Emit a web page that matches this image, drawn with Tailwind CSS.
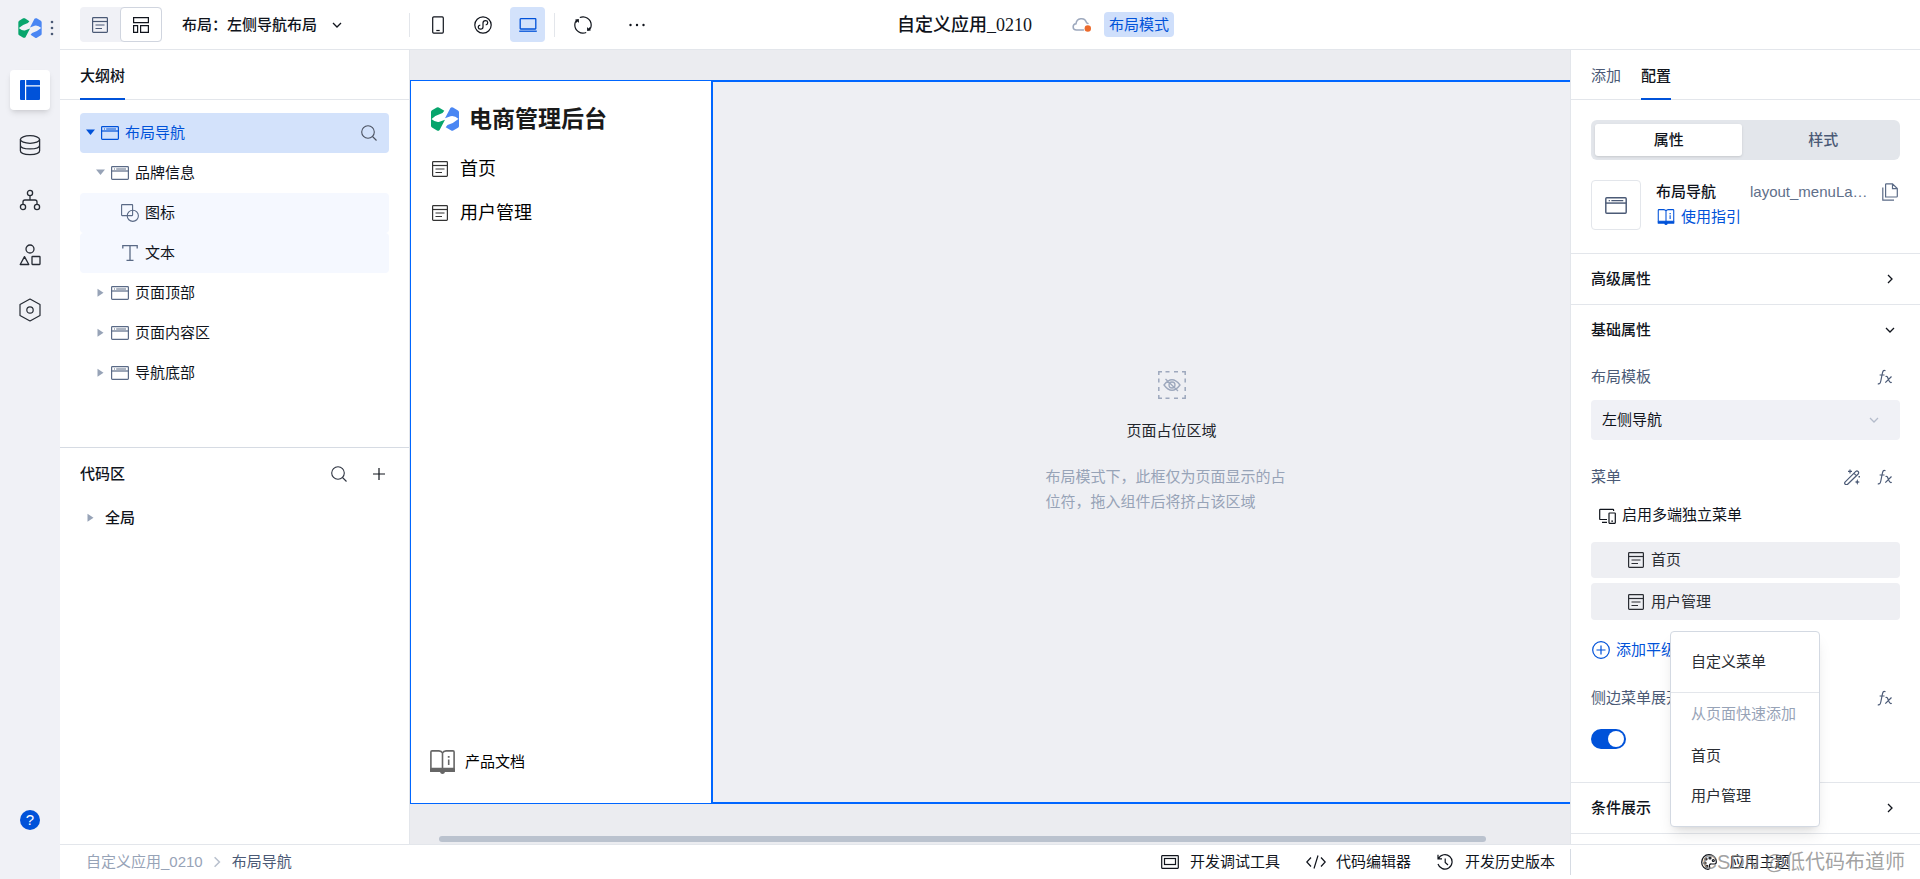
<!DOCTYPE html>
<html lang="zh-CN">
<head>
<meta charset="utf-8">
<meta name="viewport" content="width=device-width, initial-scale=1">
<title>自定义应用_0210</title>
<script src="https://cdn.jsdelivr.net/npm/@tailwindcss/browser@4"></script>
</head>
<body class="flex h-screen overflow-hidden bg-white font-['Liberation_Sans','Noto_Sans_CJK_SC',sans-serif] text-[15px] leading-5 text-[#10141c]">

<svg class="hidden" aria-hidden="true">
  <symbol id="logo" viewBox="0 0 28 24">
    <path fill="#07a56c" d="M0 5Q0 3.800 1 3.200L5.800.4Q6.800-.1 7.800.4L13.300 3.800 11.500 6Q5 8 .6 12L0 12.200Z"/>
    <path fill="#07a56c" d="M0 11.800Q5 16 8.500 14.800L14 12.700 8.600 23Q7.600 24.300 6 23.600L1 20.600Q0 20 0 18.800Z"/>
    <path fill="#4a86f3" d="M28 19Q28 20.200 27 20.800L22.200 23.600Q21.200 24.100 20.200 23.600L14.700 20.200 16.500 18Q23 16 27.400 12L28 11.800Z"/>
    <path fill="#4a86f3" d="M28 12.200Q23 8 19.500 9.200L14 11.300 19.400 1Q20.400-.3 22 .4L27 3.400Q28 4 28 5.200Z"/>
  </symbol>
  <symbol id="panel" viewBox="0 0 18 14"><g fill="none" stroke="currentColor"><rect x=".6" y=".6" width="16.800" height="12.800" rx=".8" stroke-width="1.200"/><path d="M.6 5H17.400" stroke-width="1.200"/><path d="M3 3h1M5.200 3H15"/></g></symbol>
  <symbol id="page" viewBox="0 0 16 16"><g fill="none" stroke="currentColor"><rect x=".6" y=".6" width="14.800" height="14.800" rx=".8" stroke-width="1.200"/><path d="M.6 4.500H15.400" stroke-width="1.200"/><path d="M3.500 8H12.500M3.500 11.500H10" stroke-width="1.200"/></g></symbol>
  <symbol id="search" viewBox="0 0 16 16"><g fill="none" stroke="currentColor" stroke-width="1.100"><circle cx="7" cy="7" r="6.300"/><path d="m11.500 11.500 4 4"/></g></symbol>
  <symbol id="down" viewBox="0 0 10 10"><path fill="none" stroke="currentColor" stroke-width="1.300" d="m1 3 4 4 4-4"/></symbol>
  <symbol id="right" viewBox="0 0 10 10"><path fill="none" stroke="currentColor" stroke-width="1.300" d="m3 1 4 4-4 4"/></symbol>
  <symbol id="caret-down" viewBox="0 0 10 10"><path fill="currentColor" d="M0 1.500h9L4.500 7Z"/></symbol>
  <symbol id="caret-right" viewBox="0 0 10 10"><path fill="currentColor" d="M1.500 .8v8l6-4Z"/></symbol>
  <symbol id="book" viewBox="0 0 25 24"><path fill="none" stroke="currentColor" stroke-width="1.600" d="M12.500 20V3Q11.500.9 9 .9H2Q.9.9.9 2V18.500H24.100V2Q24.100.9 23 .9H16Q13.500.9 12.500 3M18.700 9.500V15"/><path fill="currentColor" d="M0 18.500h25v3q0 .5-.5.5H15q-.5 2-2.500 2T10 22H.5Q0 22 0 21.500ZM17.800 6h1.800v1.800h-1.800Z"/></symbol>
  <symbol id="fx" viewBox="0 0 16 16"><path fill="none" stroke="currentColor" stroke-width="1.200" d="M8.500 1.800C6.500.5 5.800 2 5.300 4.500L3.800 12C3.300 14.600 2.300 15.300.8 14.600M2.600 6H7.500M8.500 7.500c1.500-.8 2 .5 2.700 2.300S13 14.500 14.700 13.300M14.500 7.500 8.300 13.700"/></symbol>
</svg>

<!-- Icon rail -->
<nav class="flex w-15 shrink-0 flex-col items-center bg-[#f0f1f6] text-[#262b34]" aria-label="主导航">
  <div class="flex h-13 w-full items-center gap-2 pt-1 pl-[18px]">
    <svg class="h-5 w-6"><use href="#logo"/></svg>
    <svg class="h-4 w-1" viewBox="0 0 4 16" fill="#4b5a76"><circle cx="2" cy="2" r="1.300"/><circle cx="2" cy="8" r="1.300"/><circle cx="2" cy="14" r="1.300"/></svg>
  </div>
  <div class="mt-[18px] flex flex-1 flex-col items-center gap-[15px]">
    <button class="flex size-10 items-center justify-center rounded bg-white shadow-md" aria-label="页面">
      <svg class="size-5" viewBox="0 0 20 20"><path fill="#0052d9" d="M1 0H5V20H1Q0 20 0 19V1Q0 0 1 0ZM6.200 0H19Q20 0 20 1V5.200H6.200ZM6.200 6.400H20V19Q20 20 19 20H6.200Z"/></svg>
    </button>
    <button class="flex size-10 items-center justify-center" aria-label="数据">
      <svg class="size-[22px]" viewBox="0 0 22 22" fill="none" stroke="currentColor" stroke-width="1.300"><ellipse cx="11" cy="5.500" rx="9.600" ry="3.800"/><path d="M1.400 5.500V16.800C1.400 21.800 20.600 21.800 20.600 16.800V5.500M1.400 11.200c0 5 19.200 5 19.200 0"/></svg>
    </button>
    <button class="flex size-10 items-center justify-center" aria-label="流程">
      <svg class="size-[22px]" viewBox="0 0 22 22" fill="none" stroke="currentColor" stroke-width="1.300"><circle cx="11" cy="4" r="2.600"/><circle cx="4" cy="18" r="2.600"/><circle cx="18" cy="18" r="2.600"/><path d="M11 6.600V11M4 15.400V13Q4 11 6 11H16Q18 11 18 13V15.400"/></svg>
    </button>
    <button class="flex size-10 items-center justify-center" aria-label="组件">
      <svg class="size-[22px]" viewBox="0 0 22 22" fill="none" stroke="currentColor" stroke-width="1.300"><circle cx="11" cy="5" r="4"/><path d="M5.500 12.600 1.200 20.500H9.800Z" stroke-linejoin="round"/><rect x="13" y="12.500" width="8" height="8" rx=".5"/></svg>
    </button>
    <button class="flex size-10 items-center justify-center" aria-label="设置">
      <svg class="h-6 w-[22px]" viewBox="0 0 22 24" fill="none" stroke="currentColor" stroke-width="1.200"><path d="M11 1 21 6.500V17.500L11 23 1 17.500V6.500Z" stroke-linejoin="round"/><circle cx="11" cy="12" r="3.200"/></svg>
    </button>
  </div>
  <button class="mb-[49px] flex size-5 items-center justify-center rounded-full bg-[#0052d9] text-[15px] text-white">?</button>
</nav>

<div class="flex min-w-0 flex-1 flex-col">

  <!-- Toolbar -->
  <header class="flex h-[50px] shrink-0 items-center border-b border-[#e3e6eb] pl-5">
    <div class="flex w-[329px] items-center">
      <div class="flex h-[35px] rounded bg-[#f0f1f6]">
        <button class="flex w-10 items-center justify-center text-[#4b5a76]" aria-label="页面模式"><svg class="size-4"><use href="#page"/></svg></button>
        <button class="flex w-[42px] items-center justify-center rounded border border-[#d0d5df] bg-white" aria-label="布局模式">
          <svg class="size-[18px]" viewBox="0 0 18 18" fill="none" stroke="currentColor" stroke-width="1.200"><path d="M1.600 1.600H16.400V6.600H1.600ZM1.600 9.600H5.600V16.400H1.600ZM8.600 9.600H16.400V16.400H8.600Z"/></svg>
        </button>
      </div>
      <button class="ml-5 flex items-center gap-[15px] font-medium">布局：左侧导航布局<svg class="size-[10px]"><use href="#down"/></svg></button>
    </div>
    <span class="h-6 w-px bg-[#e3e6eb]"></span>
    <div class="ml-[10px] flex h-[35px] items-center gap-[10px]">
      <button class="flex size-[35px] items-center justify-center" aria-label="手机"><svg class="h-[18px] w-3" viewBox="0 0 12 18" fill="none" stroke="currentColor" stroke-width="1.200"><rect x=".7" y=".9" width="10.600" height="16.200" rx="1"/><path d="M4.300 14.500h3.400"/></svg></button>
      <button class="flex size-[35px] items-center justify-center" aria-label="小程序"><svg class="size-[18px]" viewBox="0 0 18 18" fill="none" stroke="currentColor" stroke-width="1.200"><circle cx="9" cy="9" r="8.200"/><path d="M6.300 9C3.300 9.700 3.800 13.200 6.500 13.200 8 13.200 9 12.200 9 11V7C9 5.700 10 4.700 11.500 4.700 14.200 4.700 14.700 8.200 11.700 9"/></svg></button>
      <button class="flex size-[35px] items-center justify-center rounded bg-[#d3e2fb] text-[#0052d9]" aria-label="电脑"><svg class="h-[14px] w-[18px]" viewBox="0 0 18 14" fill="none" stroke="currentColor" stroke-width="1.300"><rect x="1.200" y=".7" width="15.600" height="10.300" rx=".5"/><path d="M.2 13.200H17.800"/></svg></button>
    </div>
    <span class="ml-[9px] h-6 w-px bg-[#e3e6eb]"></span>
    <button class="ml-[10px] flex size-[35px] items-center justify-center" aria-label="刷新"><svg class="size-[18px]" viewBox="0 0 18 18" fill="none" stroke="currentColor" stroke-width="1.200"><path d="M5.800 1.500A8.200 8.200 0 0 1 17.200 9Q17.200 11 16.300 12.800M12.200 16.500A8.200 8.200 0 0 1 .8 9Q.8 7 1.700 5.200"/><path fill="currentColor" stroke="none" d="M1.300 3.500 4.800 3 5 7 3.600 5.600 2 7ZM16.700 14.500 13.200 15 13 11 14.400 12.400 16 11Z"/></svg></button>
    <button class="ml-[19px] flex size-[35px] items-center justify-center" aria-label="更多"><svg class="h-1 w-4" viewBox="0 0 16 4" fill="currentColor"><circle cx="1.500" cy="2" r="1.200"/><circle cx="8" cy="2" r="1.200"/><circle cx="14.500" cy="2" r="1.200"/></svg></button>
    <div class="ml-[243px] flex items-center">
      <h1 class="font-['Liberation_Serif','Noto_Sans_CJK_SC',serif] text-lg font-medium leading-6">自定义应用_0210</h1>
      <svg class="ml-10 h-4 w-5" viewBox="0 0 20 16"><path fill="none" stroke="#9da8bd" stroke-width="1.500" stroke-linecap="round" d="M11.500 13H4.500C0 13 .2 7 4 6.700 4.500 1 12.500-.5 14.500 5.500 14.600 6 15.300 6.200 16 6.500"/><circle cx="15.800" cy="11.500" r="3.200" fill="#ec6b2d"/></svg>
      <span class="ml-3 rounded bg-[#cfdffb] px-[5px] py-[2px] leading-[21px] text-[#0052d9]">布局模式</span>
    </div>
  </header>

  <div class="flex min-h-0 flex-1">

    <!-- Outline and code -->
    <aside class="flex w-[350px] shrink-0 flex-col border-r border-[#e3e6eb]">
      <div class="flex h-[50px] border-b border-[#e3e6eb] px-5">
        <button class="-mb-px border-b-2 border-[#0052d9] pt-[3px] font-medium">大纲树</button>
      </div>
      <ul class="mt-[13px] px-5">
        <li class="flex h-10 items-center rounded bg-[#d3e2fb] pr-3 pl-[6px] text-[#0052d9]">
          <svg class="size-[10px]"><use href="#caret-down"/></svg><svg class="mr-[6px] ml-[5px] h-[14px] w-[18px]"><use href="#panel"/></svg><span class="flex-1">布局导航</span>
          <button class="text-[#4a5160]" aria-label="搜索大纲"><svg class="size-4"><use href="#search"/></svg></button>
        </li>
        <li class="flex h-10 items-center pl-4"><svg class="size-[10px] text-[#97a3b7]"><use href="#caret-down"/></svg><svg class="mr-[6px] ml-[5px] h-[14px] w-[18px] text-[#5a6a86]"><use href="#panel"/></svg>品牌信息</li>
        <li class="flex h-10 items-center rounded bg-[#f5f8ff] pl-[41px]"><svg class="mr-[6px] size-[18px] text-[#5a6a86]" viewBox="0 0 18 18" fill="none" stroke="currentColor" stroke-width="1.100"><rect x=".6" y=".6" width="11" height="11" rx=".5"/><circle cx="11.800" cy="11.800" r="5.600"/></svg>图标</li>
        <li class="flex h-10 items-center rounded bg-[#f5f8ff] pl-[41px]"><svg class="mr-[6px] size-[18px] text-[#5a6a86]" viewBox="0 0 18 18" fill="none" stroke="currentColor" stroke-width="1.300"><path d="M1.800 4.500V1.700H16.200V4.500M9 1.700V16.300M5.500 16.300h7"/></svg>文本</li>
        <li class="flex h-10 items-center pl-4"><svg class="size-[10px] text-[#97a3b7]"><use href="#caret-right"/></svg><svg class="mr-[6px] ml-[5px] h-[14px] w-[18px] text-[#5a6a86]"><use href="#panel"/></svg>页面顶部</li>
        <li class="flex h-10 items-center pl-4"><svg class="size-[10px] text-[#97a3b7]"><use href="#caret-right"/></svg><svg class="mr-[6px] ml-[5px] h-[14px] w-[18px] text-[#5a6a86]"><use href="#panel"/></svg>页面内容区</li>
        <li class="flex h-10 items-center pl-4"><svg class="size-[10px] text-[#97a3b7]"><use href="#caret-right"/></svg><svg class="mr-[6px] ml-[5px] h-[14px] w-[18px] text-[#5a6a86]"><use href="#panel"/></svg>导航底部</li>
      </ul>
      <section class="mt-[54px] flex-1 border-t border-[#d6dbe3] px-5">
        <div class="flex h-[52px] items-center">
          <h2 class="flex-1 font-medium">代码区</h2>
          <button class="text-[#2d3340]" aria-label="搜索代码"><svg class="size-4"><use href="#search"/></svg></button>
          <button class="mr-1 ml-[26px]" aria-label="添加代码"><svg class="size-3" viewBox="0 0 12 12" stroke="currentColor" stroke-width="1.200"><path d="M6 0V12M0 6H12"/></svg></button>
        </div>
        <button class="flex h-9 items-center pl-[6px] font-medium"><svg class="mr-[9px] size-[10px] text-[#97a3b7]"><use href="#caret-right"/></svg>全局</button>
      </section>
    </aside>

    <!-- Canvas -->
    <main class="flex min-w-0 flex-1 flex-col overflow-hidden bg-[#ebecf0] pt-[30px]">
      <div class="flex min-h-0 w-[calc(100%+62px)] flex-1">
        <section class="flex w-[301px] shrink-0 flex-col border border-r-0 border-[#0066ff] bg-white pb-[27px] pl-[19px]">
          <div class="mt-5 flex h-9 items-center gap-[10px] pl-px"><svg class="h-6 w-7"><use href="#logo"/></svg><h2 class="text-[23px] font-bold leading-8 text-[#1a1a1a]">电商管理后台</h2></div>
          <nav class="mt-[10px] flex flex-col text-lg text-black" aria-label="应用菜单">
            <a href="#home" class="flex h-11 items-center gap-3 pl-[2px]"><svg class="size-4 text-[#333]"><use href="#page"/></svg>首页</a>
            <a href="#users" class="flex h-11 items-center gap-3 pl-[2px]"><svg class="size-4 text-[#333]"><use href="#page"/></svg>用户管理</a>
          </nav>
          <a href="#docs" class="mt-auto flex h-7 items-center gap-[10px] text-black"><svg class="h-6 w-[25px] text-[#666]"><use href="#book"/></svg>产品文档</a>
        </section>
        <section class="flex flex-1 flex-col items-center justify-center border-2 border-[#0066ff] bg-[#eeeff3]">
          <svg class="size-7 text-[#9da8bd]" viewBox="0 0 28 28" fill="none" stroke="currentColor" stroke-width="1.500"><path d="M.8 4V.8H4M7.500.8h4M16 .8h4M24 .8h3.200V4M27.200 7.500v4M27.200 16v4M27.200 24v3.200H24M20 27.200H16M11.500 27.200h-4M4 27.200H.8V24M.8 20V16M.8 11.500v-4"/><path stroke-width="1.300" d="M6 14Q14 3.500 22 14 14 24.500 6 14ZM7.500 8 20 20"/><circle cx="14" cy="14" r="3" stroke-width="1.300"/></svg>
          <p class="mt-[22px] text-[#22252b]">页面占位区域</p>
          <p class="mt-[23px] w-[252px] leading-[25px] text-[#97a3b7]">布局模式下，此框仅为页面显示的占位符，拖入组件后将挤占该区域</p>
        </section>
      </div>
      <div class="pt-8 pr-[84px] pb-[2px] pl-[29px]"><div class="h-[6px] rounded-full bg-[#bac2ce]"></div></div>
    </main>

    <!-- Inspector -->
    <aside class="relative flex w-[350px] shrink-0 flex-col border-l border-[#e3e6eb] [&>*]:shrink-0">
      <div class="flex h-[50px] gap-5 border-b border-[#e3e6eb] px-5">
        <button class="pt-[2px] text-[#4b5a76]">添加</button>
        <button class="-mb-px border-b-2 border-[#0052d9] pt-[3px] font-medium">配置</button>
      </div>
      <div class="mx-5 mt-5 flex h-10 rounded-md bg-[#e3e6eb] p-1 font-medium">
        <button class="w-[49%] rounded-[3px] bg-white shadow">属性</button>
        <button class="flex-1 pl-2 text-[#4b5a76]">样式</button>
      </div>
      <div class="mx-5 mt-5 flex h-[50px] gap-[15px]">
        <div class="flex size-[50px] items-center justify-center rounded border border-[#e3e6eb] text-[#4b5a76]"><svg class="h-[17px] w-[22px]"><use href="#panel"/></svg></div>
        <div class="flex min-w-0 flex-1 flex-col gap-[3px]">
          <div class="flex items-center leading-6"><strong class="w-[94px] shrink-0 font-medium">布局导航</strong><span class="w-[125px] truncate text-[#5f6f8a]">layout_menuLayout_1</span>
            <button class="ml-auto text-[#5a6a86]" aria-label="复制"><svg class="mr-[2px] h-[18px] w-4" viewBox="0 0 16 18" fill="none" stroke="currentColor" stroke-width="1.200"><path d="M3.600 1.600Q3.600.8 4.400.8H10.500L15.300 5.600V13.200Q15.300 14 14.500 14H3.600ZM10.500.8V5.600H15.300M.8 4.500V17.200H12"/></svg></button>
          </div>
          <a href="#guide" class="flex items-center gap-[6px] pl-px text-[#0052d9]"><svg class="h-4 w-[18px]"><use href="#book"/></svg>使用指引</a>
        </div>
      </div>
      <button class="mt-[23px] flex h-[51px] items-center border-t border-[#e3e6eb] pr-[25px] pl-5 font-medium"><span class="flex-1 text-left">高级属性</span><svg class="size-[10px]"><use href="#right"/></svg></button>
      <button class="flex h-[50px] items-center border-t border-[#e3e6eb] pr-[25px] pl-5 font-medium"><span class="flex-1 text-left">基础属性</span><svg class="size-[10px]"><use href="#down"/></svg></button>

      <div class="flex flex-col px-5">
        <div class="mt-[13px] flex h-5 items-center text-[#4b5a76]"><label for="tpl" class="flex-1">布局模板</label><button class="mr-[7px]" aria-label="布局模板表达式"><svg class="size-4"><use href="#fx"/></svg></button></div>
        <div class="mt-[13px] flex h-10 items-center rounded bg-[#f0f1f6] pr-[21px] pl-[11px]">
          <select id="tpl" class="h-10 flex-1 appearance-none bg-transparent"><option>左侧导航</option></select><svg class="size-[10px] text-[#b4bccb]"><use href="#down"/></svg>
        </div>
        <div class="mt-[27px] flex h-5 items-center text-[#4b5a76]"><span class="flex-1">菜单</span>
          <button class="mr-[17px]" aria-label="智能生成菜单"><svg class="size-4" viewBox="0 0 16 16" fill="none" stroke="currentColor" stroke-width="1.200"><path d="M1 13.200 11.800 2.400Q13 1.500 14.100 2.500T14.200 5L3.400 15.500Q2.200 16 1.200 15.200T1 13.200ZM10 4.400l2.300 2.300M6 .4v4M4 2.400h4" stroke-linejoin="round"/><path fill="currentColor" stroke="none" d="M13.300 10l.8 2.200 1.900.8-1.900.8-.8 2.200-.8-2.200L10.600 13l1.900-.8ZM14.500 7h1.500v1.500h-1.500Z"/></svg></button>
          <button class="mr-[7px]" aria-label="菜单表达式"><svg class="size-4"><use href="#fx"/></svg></button></div>
        <button class="mt-[18px] flex h-5 items-center gap-[6px] self-start pl-2"><svg class="size-[17px]" viewBox="0 0 17 17" fill="none" stroke="currentColor" stroke-width="1.200"><path d="M8 12.500H1.300Q.7 12.500.7 12V3Q.7 2.400 1.300 2.400H14Q14.600 2.400 14.600 3V4M3 15.300H8"/><rect x="10" y="6" width="6.300" height="10.300" rx=".5"/><path d="M12.300 14.200h1.700"/></svg>启用多端独立菜单</button>
        <ul class="mt-[17px] flex flex-col gap-[5px] text-[#2a2d33]">
          <li class="flex h-9 items-center gap-[7px] rounded bg-[#eeeff3] pl-[37px]"><svg class="size-4"><use href="#page"/></svg>首页</li>
          <li class="flex h-[37px] items-center gap-[7px] rounded bg-[#eeeff3] pl-[37px]"><svg class="size-4"><use href="#page"/></svg>用户管理</li>
        </ul>
        <button class="mt-5 flex h-5 items-center gap-[6px] self-start pl-px text-[#0052d9]"><svg class="size-[18px]" viewBox="0 0 18 18" fill="none" stroke="currentColor" stroke-width="1.200"><circle cx="9" cy="9" r="8.300"/><path d="M9 4.500v9M4.500 9h9"/></svg>添加平级菜单</button>
        <div class="mt-[28px] flex h-5 items-center text-[#4b5a76]"><label for="expand" class="flex-1">侧边菜单展开</label><button class="mr-[7px]" aria-label="展开表达式"><svg class="size-4"><use href="#fx"/></svg></button></div>
        <input id="expand" type="checkbox" checked class="mt-[21px] h-5 w-[35px] appearance-none rounded-full bg-[#a6adba] before:mt-[2px] before:ml-[2px] before:block before:size-4 before:rounded-full before:bg-white checked:bg-[#0052d9] checked:before:ml-[17px]">
      </div>
      <button class="mt-[33px] flex h-[51px] items-center border-t border-[#e3e6eb] pr-[25px] pl-5 font-medium"><span class="flex-1 text-left">条件展示</span><svg class="size-[10px]"><use href="#right"/></svg></button>
      <div class="border-t border-[#e3e6eb]"></div>

      <!-- Add-menu popup -->
      <div class="absolute top-[581px] right-[100px] flex w-[150px] flex-col rounded border border-[#d3d9e2] bg-white text-[#2a2d33] shadow-lg" role="menu">
        <button role="menuitem" class="h-[60px] px-5 text-left">自定义菜单</button>
        <div class="border-t border-[#e3e6eb] px-5 pt-[11px] pb-[12px] text-nowrap text-[#97a3b7]">从页面快速添加</div>
        <button role="menuitem" class="h-10 px-5 text-left">首页</button>
        <button role="menuitem" class="mb-[10px] h-10 px-5 text-left">用户管理</button>
      </div>
    </aside>
  </div>

  <!-- Status bar -->
  <footer class="relative flex h-[35px] shrink-0 items-center border-t border-[#e3e6eb]">
    <nav class="flex flex-1 items-center pl-[26px]" aria-label="面包屑">
      <a href="#app" class="text-[#97a3b7]">自定义应用_0210</a>
      <svg class="mr-[9px] ml-2 h-3 w-3 text-[#b9c1ce]"><use href="#right"/></svg>
      <a href="#layout" class="text-[#4b5a76]">布局导航</a>
    </nav>
    <div class="flex items-center gap-[26px] pr-[15px]">
      <button class="flex items-center gap-[11px]"><svg class="h-[14px] w-[18px]" viewBox="0 0 18 14" fill="none" stroke="currentColor" stroke-width="1.200"><rect x=".7" y=".7" width="16.600" height="12.600" rx=".5"/><rect x="3.500" y="3.500" width="11" height="6"/></svg>开发调试工具</button>
      <button class="flex items-center gap-[10px]"><svg class="h-[14px] w-5" viewBox="0 0 20 14" fill="none" stroke="currentColor" stroke-width="1.200"><path d="M5 2.500.8 7 5 11.500M15 2.500 19.200 7 15 11.500M12 .5 8 13.500"/></svg>代码编辑器</button>
      <button class="flex items-center gap-3"><svg class="size-4" viewBox="0 0 16 16" fill="none" stroke="currentColor" stroke-width="1.200"><path d="M1.500 4.500A7.200 7.200 0 1 1 1 10M1 .8V4.800H5M8.200 4.500V8.500L11 11"/></svg>开发历史版本</button>
    </div>
    <div class="flex h-[26px] w-[350px] justify-center border-l border-[#d6dbe3]">
      <button class="flex items-center gap-3"><svg class="size-4" viewBox="0 0 16 16" fill="none" stroke="currentColor" stroke-width="1.200"><path d="M15.300 7.500C15 3.500 12 .7 8 .7 3.700.7.7 4 .7 8.200c0 4 2.800 7 6.300 7.100 1.800 0 2-1.300 1.600-2.600C8 10.800 8.800 9.800 10.500 10h3C14.800 10 15.400 9 15.300 7.500Z"/><circle cx="4" cy="9" r="1"/><circle cx="5" cy="5" r="1"/><circle cx="9" cy="4" r="1"/><circle cx="12.300" cy="6.500" r="1"/><circle cx="5.800" cy="12.300" r="1"/></svg>应用主题</button>
    </div>
    <span class="pointer-events-none absolute top-[3px] right-[15px] text-xl leading-7 text-[#8a8a8a]/80">CSDN @低代码布道师</span>
  </footer>
</div>
</body>
</html>
